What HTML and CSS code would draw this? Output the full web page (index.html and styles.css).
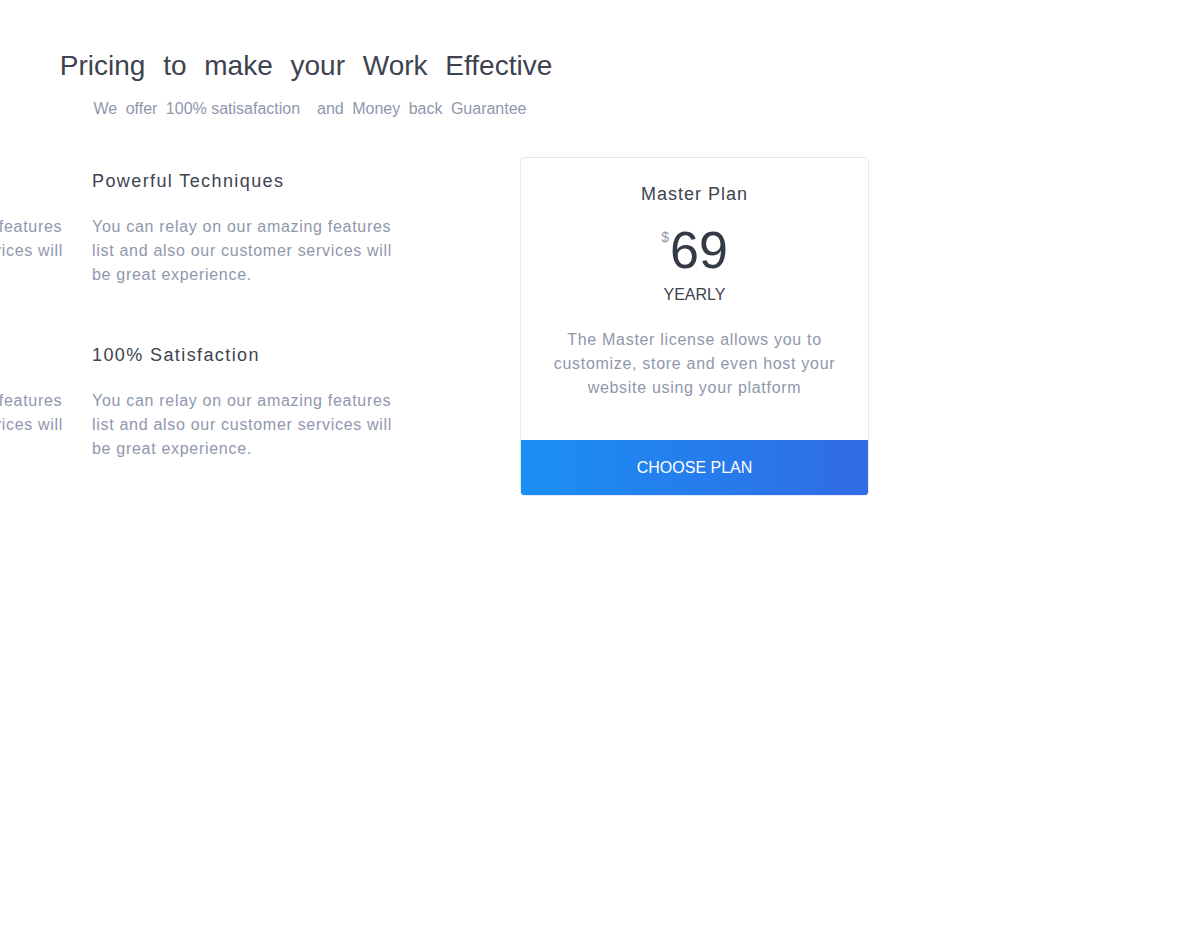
FILE: index.html
```html
<!DOCTYPE html>
<html>
  <head>
    <link rel="stylesheet" href="styles.css">
  </head>
  <body>
    <div class="page">
      <div class="intro">
        <h2>Pricing to make your Work Effective</h2>
        <p>We offer <span class="tight">100% satisafaction</span> &nbsp;and Money back Guarantee</p>
      </div>

      <div class="pricing">
        <div class="features">
          <!-- carousel: first column scrolled off to the left -->
          <div class="feature-col">
            <div class="feature">
              <h4>Powerful Techniques</h4>
              <p>You can relay on our amazing features list and also our customer services will be great experience.</p>
            </div>
            <div class="feature">
              <h4>100% Satisfaction</h4>
              <p>You can relay on our amazing features list and also our customer services will be great experience.</p>
            </div>
          </div>
          <div class="feature-col">
            <div class="feature">
              <h4>Powerful Techniques</h4>
              <p>You can relay on our amazing features list and also our customer services will be great experience.</p>
            </div>
            <div class="feature">
              <h4>100% Satisfaction</h4>
              <p>You can relay on our amazing features list and also our customer services will be great experience.</p>
            </div>
          </div>
        </div>

        <div class="plan-card">
          <div class="plan-body">
            <h3>Master Plan</h3>
            <div class="price"><span class="currency">$</span>69</div>
            <div class="period">YEARLY</div>
            <p>The Master license allows you to customize, store and even host your website using your platform</p>
          </div>
          <button class="choose">CHOOSE PLAN</button>
        </div>
      </div>
    </div>
  </body>
</html>
```

FILE: styles.css
```css
/* CSS styles */
body {
  margin: 0;
  font-family: "Liberation Sans", Arial, sans-serif;
  background-color: #fff;
  color: #3d4350;
}

.page {
  padding-top: 49px;
}

.intro {
  width: 612px;
  text-align: center;
}

.intro h2 {
  margin: 0;
  font-size: 28px;
  font-weight: 400;
  line-height: 34px;
  word-spacing: 10px;
  color: #3d4350;
}

.intro p {
  margin: 16px 0 0;
  padding-left: 8px;
  font-size: 16px;
  line-height: 20px;
  word-spacing: 4px;
  color: #8f97ad;
}

.intro .tight {
  word-spacing: 0;
}

.pricing {
  display: flex;
  align-items: flex-start;
  margin-top: 37px;
}

.features {
  display: flex;
  gap: 25px;
  margin-left: -237px;
  padding-top: 14px;
}

.feature-col {
  width: 304px;
}

.feature {
  margin-bottom: 57px;
}

.feature h4 {
  margin: 0 0 23px;
  font-size: 18px;
  font-weight: 400;
  line-height: 22px;
  letter-spacing: 1.4px;
  color: #3d4350;
}

.feature p {
  margin: 0;
  font-size: 16px;
  line-height: 24px;
  letter-spacing: 0.7px;
  color: #8f97ad;
}

.plan-card {
  width: 347px;
  margin-top: 1px;
  margin-left: 124px;
  border: 1px solid #e8e9f0;
  border-radius: 4px;
  overflow: hidden;
  text-align: center;
}

.plan-body {
  padding: 24px 24px 40px;
}

.plan-body h3 {
  margin: 0;
  font-size: 18px;
  font-weight: 400;
  line-height: 24px;
  letter-spacing: 1px;
}

.price {
  margin-top: 18px;
  font-size: 52px;
  line-height: 52px;
  color: #343a46;
}

.currency {
  margin-right: 1px;
  font-size: 14px;
  vertical-align: top;
  line-height: 26px;
  color: #8f97ad;
}

.period {
  margin-top: 9px;
  font-size: 16px;
  line-height: 20px;
}

.plan-body p {
  margin: 23px 0 0;
  font-size: 16px;
  line-height: 24px;
  letter-spacing: 0.7px;
  color: #8f97ad;
}

.choose {
  display: block;
  width: 100%;
  height: 55px;
  border: none;
  background: linear-gradient(to right, #1a8ff4, #316be5);
  color: #fff;
  font-family: inherit;
  font-size: 16px;
  cursor: pointer;
}
```
